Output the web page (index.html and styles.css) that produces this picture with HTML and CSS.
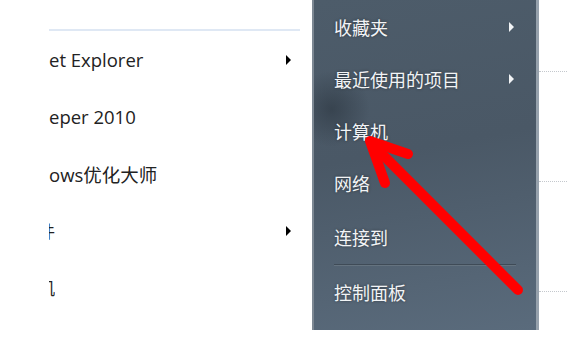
FILE: index.html
```html
<!DOCTYPE html>
<html lang="zh-CN">
<head>
    <meta charset="UTF-8">
    <title>开始菜单</title>
    <link rel="stylesheet" href="styles.css">
</head>
<body>

<div class="start-menu">
    <!-- Programs list (cut off on the left) -->
    <div class="programs">
        <div class="rule"></div>
        <ul class="prog-list">
            <li class="prog"><span>et Explorer</span><span class="arrow-dark"></span></li>
            <li class="prog"><span>eper 2010</span></li>
            <li class="prog"><span>ows优化大师</span></li>
            <li class="prog"><span class="sliver">附件</span><span class="arrow-dark"></span></li>
            <li class="prog"><span class="sliver">计算机</span></li>
        </ul>
    </div>

    <!-- Right-hand dark pane -->
    <div class="places">
        <ul class="place-list">
            <li class="place"><span>收藏夹</span><span class="arrow-light"></span></li>
            <li class="place"><span>最近使用的项目</span><span class="arrow-light"></span></li>
            <li class="place"><span>计算机</span></li>
            <li class="place"><span>网络</span></li>
            <li class="place tall"><span>连接到</span></li>
            <li class="separator"></li>
            <li class="place"><span>控制面板</span></li>
        </ul>
    </div>

    <div class="outside">
        <div class="dots first"></div>
        <div class="dots"></div>
        <div class="dots"></div>
    </div>
</div>

<!-- Red annotation arrow drawn over the menu -->
<svg class="annotation" width="567" height="351" viewBox="0 0 567 351">
    <g stroke="#ff0000" stroke-width="10" stroke-linecap="round" stroke-linejoin="round" fill="none">
        <line x1="372" y1="144" x2="518" y2="290"/>
        <polyline points="408,154 370,141 385,183"/>
    </g>
</svg>

</body>
</html>
```

FILE: styles.css
```css
/* Start menu screenshot */
body {
    margin: 0;
    width: 567px;
    height: 351px;
    overflow: hidden;
    background: #ffffff;
    position: relative;
}

ul {
    list-style: none;
    margin: 0;
    padding: 0;
}

.start-menu {
    display: flex;
    align-items: flex-start;
}

/* left column */
.programs {
    width: 312px;
    box-sizing: border-box;
    padding: 29px 21px 0 49px;
    font-family: "Open Sans", "Noto Sans CJK SC", sans-serif;
    font-size: 18.5px;
    color: #222;
}

.rule {
    height: 2px;
    background: #dfe8f4;
    margin-right: -9px;
}

.prog {
    height: 57px;
    display: flex;
    align-items: center;
    justify-content: space-between;
}

/* only the right edge of the last glyph shows */
.sliver {
    display: inline-block;
    width: 6px;
    overflow: hidden;
    white-space: nowrap;
    direction: rtl;
    font-size: 17px;
}

.arrow-dark {
    width: 0;
    height: 0;
    border-top: 5px solid transparent;
    border-bottom: 5px solid transparent;
    border-left: 5px solid #000;
}

/* dark pane */
.places {
    width: 227px;
    height: 330px;
    box-sizing: border-box;
    border-left: 2px solid #7d8893;
    border-right: 3px solid #96a1ac;
    background:
        radial-gradient(circle at 8% 33%, rgba(40, 50, 60, 0.55), rgba(40, 50, 60, 0) 38px),
        linear-gradient(170deg, #4d5c6a 0%, #4a5866 45%, #5a6b7c 100%);
    padding: 1px 20px 0 20px;
    font-family: "Noto Sans CJK SC", "Noto Sans", sans-serif;
    font-size: 18px;
    color: #f2f4f6;
    text-shadow: 0 0 3px rgba(0, 0, 0, 0.45);
}

.place {
    height: 52px;
    display: flex;
    align-items: center;
    justify-content: space-between;
    padding-right: 2px;
}

.place.tall {
    height: 55px;
}

.separator {
    height: 1px;
    background: #3f4b57;
    border-bottom: 1px solid #65737f;
}

.arrow-light {
    width: 0;
    height: 0;
    border-top: 5px solid transparent;
    border-bottom: 5px solid transparent;
    border-left: 5px solid #f2f4f6;
}

/* area to the right of the pane */
.outside {
    flex: 1;
}

.dots {
    height: 109px;
    border-bottom: 1px dotted #c4c8cd;
}

.dots.first {
    height: 71px;
}

.annotation {
    position: absolute;
    left: 0;
    top: 0;
}
```
